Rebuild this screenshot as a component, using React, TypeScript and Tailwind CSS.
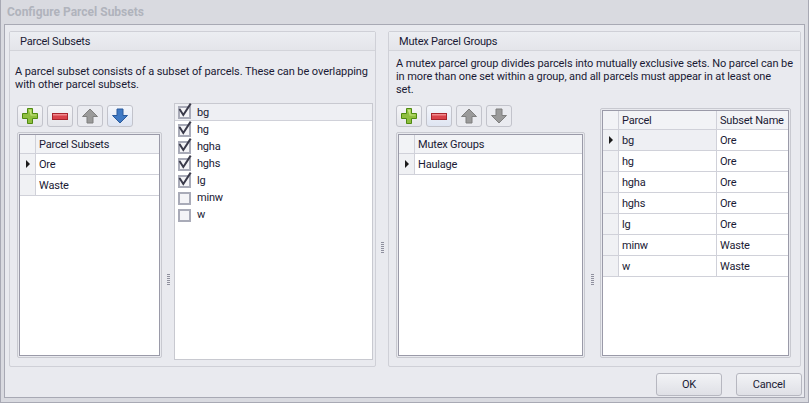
const font = "font-['Roboto',sans-serif]";

function Plus() {
  return (
    <svg width="18" height="18" viewBox="0 0 18 18">
      <path d="M6.5 1.5h5v5h5v5h-5v5h-5v-5h-5v-5h5z" fill="#8fbf3f" stroke="#4f8a10" />
      <path d="M7.5 2.5h3v5h5v1h-6v-1M2.5 7.5h5" fill="#c4e27e" />
    </svg>
  );
}
function Minus() {
  return (
    <svg width="18" height="18" viewBox="0 0 18 18">
      <rect x="1.5" y="6.5" width="15" height="6" fill="#d9434b" stroke="#a8242c" />
      <rect x="2" y="7" width="14" height="1.5" fill="#f08a8e" />
    </svg>
  );
}
function Arrow({ dir, blue }: { dir: "up" | "down"; blue?: boolean }) {
  const fill = blue ? "#3f79c4" : "#9a9a9a";
  const stroke = blue ? "#2a5a9c" : "#7f7f7f";
  return (
    <svg width="16" height="16" viewBox="0 0 16 16">
      <path
        d={dir === "up" ? "M8 1L15.5 8.5H11V15H5V8.5H.5z" : "M5 1h6v6.5h4.5L8 15 .5 7.5H5z"}
        fill={fill}
        stroke={stroke}
      />
    </svg>
  );
}

function TB({ children, active, faded }: { children: React.ReactNode; active?: boolean; faded?: boolean }) {
  return (
    <div
      className={`w-[26px] h-[22px] flex items-center justify-center rounded-[3px] border border-[#c2c3cb] ${
        active ? "bg-gradient-to-b from-[#f4f6fb] to-[#dfe5f2]" : faded ? "bg-[#eaebf0]" : "bg-gradient-to-b from-[#f5f5f8] to-[#e4e5ea]"
      }`}
    >
      {children}
    </div>
  );
}

function Indicator({ on }: { on?: boolean }) {
  return (
    <div className="w-[16px] shrink-0 border-r border-b border-[#d0d1d9] bg-[#f0f1f4] flex items-center justify-center">
      {on && <div className="w-0 h-0 border-y-[4px] border-y-transparent border-l-[4px] border-l-[#1b1b1b]" />}
    </div>
  );
}

function Grid({ title, rows, className }: { title: string; rows: string[]; className: string }) {
  return (
    <div className={`${className} border border-[#c8c9d0] rounded-[2px] p-px flex`}>
      <div className="flex-1 border border-[#9a9aa8] bg-white flex flex-col">
        <div className="flex h-[19px] bg-[#f2f3f6] border-b border-[#d0d1d9]">
          <div className="w-[16px] border-r border-[#d0d1d9]" />
          <div className="pl-[3px] flex items-center text-[#1a1a34]">{title}</div>
        </div>
        {rows.map((r, i) => (
          <div key={r} className="flex h-[21px]">
            <Indicator on={i === 0} />
            <div className="flex-1 pl-[3px] flex items-center border-b border-[#d0d1d9] text-[#1a1a34]">{r}</div>
          </div>
        ))}
      </div>
    </div>
  );
}

function Check({ label, checked, first }: { label: string; checked: boolean; first?: boolean }) {
  return (
    <div className={`h-[17px] flex items-center pl-[3px] ${first ? "bg-[#eeeff3] border-b border-[#d0d1d9]" : ""}`}>
      <div className="relative w-[13px] h-[13px] mt-[1px] border-2 border-[#a9abb8] bg-[#f4f4f7] mr-[6px]">
        {checked && (
          <svg className="absolute left-[-2px] top-[-5px]" width="15" height="15" viewBox="0 0 15 15">
            <path d="M1.5 6L5.3 12L12.7 .6" fill="none" stroke="#3a3a4a" strokeWidth="2" />
          </svg>
        )}
      </div>
      <span className="text-[#1a1a34]">{label}</span>
    </div>
  );
}

function GroupHeader({ children }: { children: React.ReactNode }) {
  return (
    <div className="h-[19px] pl-[10px] flex items-center bg-gradient-to-b from-[#eceef2] to-[#e4e5ea] border-b border-[#d3d4da] text-[#1a1a34]">
      {children}
    </div>
  );
}

function Grip({ className }: { className: string }) {
  return (
    <div className={`${className} shrink-0 flex flex-col items-center gap-px`}>
      {[0, 1, 2, 3, 4, 5].map((i) => (
        <div key={i} className="w-[3px] h-[1px] bg-[#8f909e]" />
      ))}
    </div>
  );
}

export default function App() {
  const parcels: [string, string][] = [
    ["bg", "Ore"], ["hg", "Ore"], ["hgha", "Ore"], ["hghs", "Ore"], ["lg", "Ore"], ["minw", "Waste"], ["w", "Waste"],
  ];
  return (
    <div className={`${font} w-[809px] h-[403px] flex flex-col bg-[#d9dae0] border-l border-r border-b border-[#a8a9b4] text-[11px] leading-[13px] tracking-[-0.2px] whitespace-nowrap overflow-hidden`}>
      <div className="h-[24px] shrink-0 pl-[6px] flex items-center font-bold text-[12px] tracking-[0px] text-[#b0b3bc]">Configure Parcel Subsets</div>
      <div className="flex-1 mx-[3px] mb-[4px] bg-[#e9eaef] border border-[#a8a9b4] flex flex-col pl-[4px] pr-[3px] pt-[6px] min-w-0">
        <div className="flex h-[336px]">
          <div className="w-[367px] shrink-0 border border-[#cfd0d7] rounded-[2px] flex flex-col">
            <GroupHeader>Parcel Subsets</GroupHeader>
            <div className="flex-1 flex flex-col pl-[7px] pr-[2px] pb-[8px]">
              <div className="pt-[14px] ml-[-2px] h-[52px] tracking-[-0.08px] text-[#1a1a34]">
                A parcel subset consists of a subset of parcels. These can be overlapping<br />with other parcel subsets.
              </div>
              <div className="flex-1 flex">
                <div className="w-[145px] shrink-0 flex flex-col pt-[2px]">
                  <div className="flex gap-[4px] h-[27px]">
                    <TB><Plus /></TB>
                    <TB><Minus /></TB>
                    <TB faded><Arrow dir="up" /></TB>
                    <TB active><Arrow dir="down" blue /></TB>
                  </div>
                  <Grid title="Parcel Subsets" rows={["Ore", "Waste"]} className="flex-1" />
                </div>
                <Grip className="w-[12px] pt-[171px]" />
                <div className="flex-1 mb-[-2px] bg-white border border-[#c8c9d0]">
                  <Check label="bg" checked first />
                  <Check label="hg" checked />
                  <Check label="hgha" checked />
                  <Check label="hghs" checked />
                  <Check label="lg" checked />
                  <Check label="minw" checked={false} />
                  <Check label="w" checked={false} />
                </div>
              </div>
            </div>
          </div>
          <Grip className="w-[12px] pt-[211px]" />
          <div className="flex-1 min-w-0 border border-[#cfd0d7] rounded-[2px] flex flex-col">
            <GroupHeader>Mutex Parcel Groups</GroupHeader>
            <div className="flex-1 flex flex-col pl-[7px] pr-[9px] pb-[8px]">
              <div className="pt-[6px] h-[52px] tracking-[-0.1px] text-[#1a1a34]">
                A mutex parcel group divides parcels into mutually exclusive sets. No parcel can be<br />in more than one set within a group, and all parcels must appear in at least one<br />set.
              </div>
              <div className="flex-1 flex min-w-0">
                <div className="w-[189px] shrink-0 flex flex-col pt-[2px]">
                  <div className="flex gap-[4px] h-[27px]">
                    <TB><Plus /></TB>
                    <TB active><Minus /></TB>
                    <TB faded><Arrow dir="up" /></TB>
                    <TB faded><Arrow dir="down" /></TB>
                  </div>
                  <Grid title="Mutex Groups" rows={["Haulage"]} className="flex-1" />
                </div>
                <Grip className="w-[15px] pt-[171px]" />
                <div className="flex-1 min-w-0 mt-[5px] border border-[#c8c9d0] rounded-[2px] p-px flex">
                  <div className="flex-1 min-w-0 border border-[#9a9aa8] bg-white flex flex-col">
                    <div className="flex h-[19px] bg-[#f2f3f6] border-b border-[#d0d1d9] text-[#1a1a34]">
                      <div className="w-[16px] border-r border-[#d0d1d9]" />
                      <div className="w-[98px] pl-[3px] flex items-center border-r border-[#d0d1d9]">Parcel</div>
                      <div className="flex-1 pl-[3px] flex items-center">Subset Name</div>
                    </div>
                    {parcels.map(([p, s], i) => (
                      <div key={p} className="flex h-[21px] text-[#1a1a34]">
                        <Indicator on={i === 0} />
                        <div className={`w-[98px] pl-[3px] flex items-center border-r border-b border-[#d0d1d9] ${i === 0 ? "bg-[#eeeff3]" : ""}`}>{p}</div>
                        <div className="flex-1 pl-[3px] flex items-center border-b border-[#d0d1d9]">{s}</div>
                      </div>
                    ))}
                  </div>
                </div>
              </div>
            </div>
          </div>
        </div>
        <div className="flex justify-end gap-[14px] mt-[6px] mr-[-1px]">
          <div className="w-[66px] h-[23px] flex items-center justify-center rounded-[3px] border border-[#b6b7c0] bg-gradient-to-b from-[#f2f3f6] to-[#dfe0e6] text-[#1a1a34]">OK</div>
          <div className="w-[66px] h-[23px] flex items-center justify-center rounded-[3px] border border-[#b6b7c0] bg-gradient-to-b from-[#f2f3f6] to-[#dfe0e6] text-[#1a1a34]">Cancel</div>
        </div>
      </div>
    </div>
  );
}
